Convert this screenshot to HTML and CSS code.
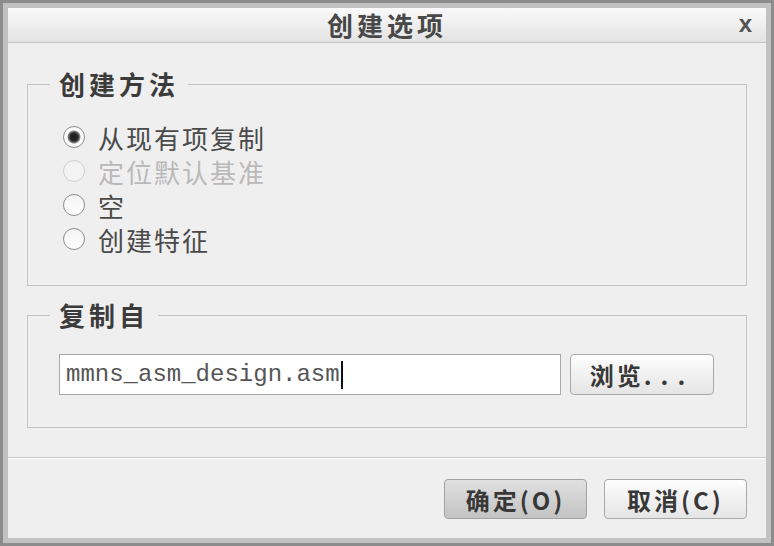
FILE: index.html
```html
<!DOCTYPE html>
<html lang="zh-CN">
<head>
  <meta charset="UTF-8">
  <title>创建选项</title>
  <link rel="stylesheet" href="styles.css">
</head>
<body>

<div class="frame">
  <div class="window">
    <div class="titlebar">
      <span></span>
      <h1 class="title">创建选项</h1>
      <span class="close">x</span>
    </div>

    <div class="content">
      <fieldset class="group">
        <legend>创建方法</legend>
        <div class="options">
          <label class="option"><input type="radio" name="method" checked>从现有项复制</label>
          <label class="option disabled"><input type="radio" name="method" disabled>定位默认基准</label>
          <label class="option"><input type="radio" name="method">空</label>
          <label class="option"><input type="radio" name="method">创建特征</label>
        </div>
      </fieldset>

      <fieldset class="group group-copy">
        <legend>复制自</legend>
        <div class="copy-row">
          <div class="path-field"><span>mmns_asm_design.asm</span><span class="caret"></span></div>
          <button class="btn btn-browse">浏览<span class="dots">...</span></button>
        </div>
      </fieldset>
    </div>

    <div class="footer">
      <button class="btn btn-default">确定(O)</button>
      <button class="btn">取消(C)</button>
    </div>
  </div>
</div>

</body>
</html>
```

FILE: styles.css
```css
* {
  box-sizing: border-box;
}
html, body {
  margin: 0;
  padding: 0;
  background-color: #8c8c8c;
  font-family: "Noto Sans CJK SC", sans-serif;
}
.frame {
  width: 774px;
  height: 546px;
  border: 3px solid #8c8c8c;
  padding: 5px;
  background-color: #c2c2c2;
}
.window {
  height: 530px;
  background-color: #efefef;
  display: flex;
  flex-direction: column;
}
.titlebar {
  height: 35px;
  border-bottom: 1px solid #c4c4c4;
  background: linear-gradient(#fafafa, #e3e3e3);
  display: grid;
  grid-template-columns: 1fr auto 1fr;
  align-items: center;
  padding: 0 14px;
}
.title {
  margin: 0;
  font-size: 26px;
  font-weight: bold;
  line-height: 1;
  letter-spacing: 4px;
  color: #484848;
}
.close {
  justify-self: end;
  font-family: "Liberation Sans", sans-serif;
  font-weight: bold;
  font-size: 24px;
  line-height: 1;
  color: #555;
  margin-top: -3px;
}
.content {
  padding: 26px 19px 0;
}
.group {
  margin: 0;
  padding: 0;
  min-width: 0;
  border: 1px solid #c3c3c3;
}
.group legend {
  margin-left: 22px;
  padding: 0 9px;
  font-size: 26px;
  line-height: 30px;
  letter-spacing: 4px;
  font-weight: bold;
  color: #3b3b3b;
}
.options {
  padding: 21px 0 29px 35px;
}
.option {
  display: flex;
  align-items: center;
  gap: 13px;
  height: 34px;
  font-size: 26px;
  letter-spacing: 2px;
  color: #4a4a4a;
}
.option input {
  appearance: none;
  -webkit-appearance: none;
  margin: 0;
  width: 22px;
  height: 22px;
  border-radius: 50%;
  border: 1px solid #8e8e8e;
  background: linear-gradient(#f4f4f4, #ffffff);
}
.option input:checked {
  background: radial-gradient(circle, #1c1c1c 0, #2a2a2a 4px, #8a8a8a 6px, #ffffff 7px, #f0f0f0 100%);
}
.option.disabled {
  color: #b9b9b9;
}
.option.disabled input {
  border-color: #d0d0d0;
  background: #f3f3f3;
}
.group-copy {
  margin-top: 14px;
}
.copy-row {
  display: flex;
  gap: 9px;
  padding: 24px 32px 32px 31px;
}
.path-field {
  flex: 1;
  height: 41px;
  display: flex;
  align-items: center;
  padding-left: 6px;
  background-color: #fff;
  border: 1px solid #a8a8a8;
  font-family: "Liberation Mono", monospace;
  font-size: 24px;
  color: #555;
}
.caret {
  width: 2px;
  height: 28px;
  background-color: #111;
  margin-left: 1px;
}
.btn {
  width: 144px;
  height: 41px;
  padding: 0;
  border: 1px solid #a9a9a9;
  border-radius: 4px;
  background: linear-gradient(#fdfdfd, #e5e5e5);
  font-family: inherit;
  font-size: 24px;
  font-weight: bold;
  letter-spacing: 3px;
  color: #383838;
}
.btn-browse .dots {
  letter-spacing: 9px;
}
.footer {
  margin-top: auto;
  display: flex;
  justify-content: flex-end;
  gap: 17px;
  padding: 21px 19px 19px;
  border-top: 1px solid #c8c8c8;
  box-shadow: inset 0 1px 0 #ffffff;
}
.footer .btn {
  width: 143px;
  height: 40px;
}
.btn-default {
  background: linear-gradient(#e0e0e0, #c3c3c3);
  border-color: #a2a2a2;
}
```
